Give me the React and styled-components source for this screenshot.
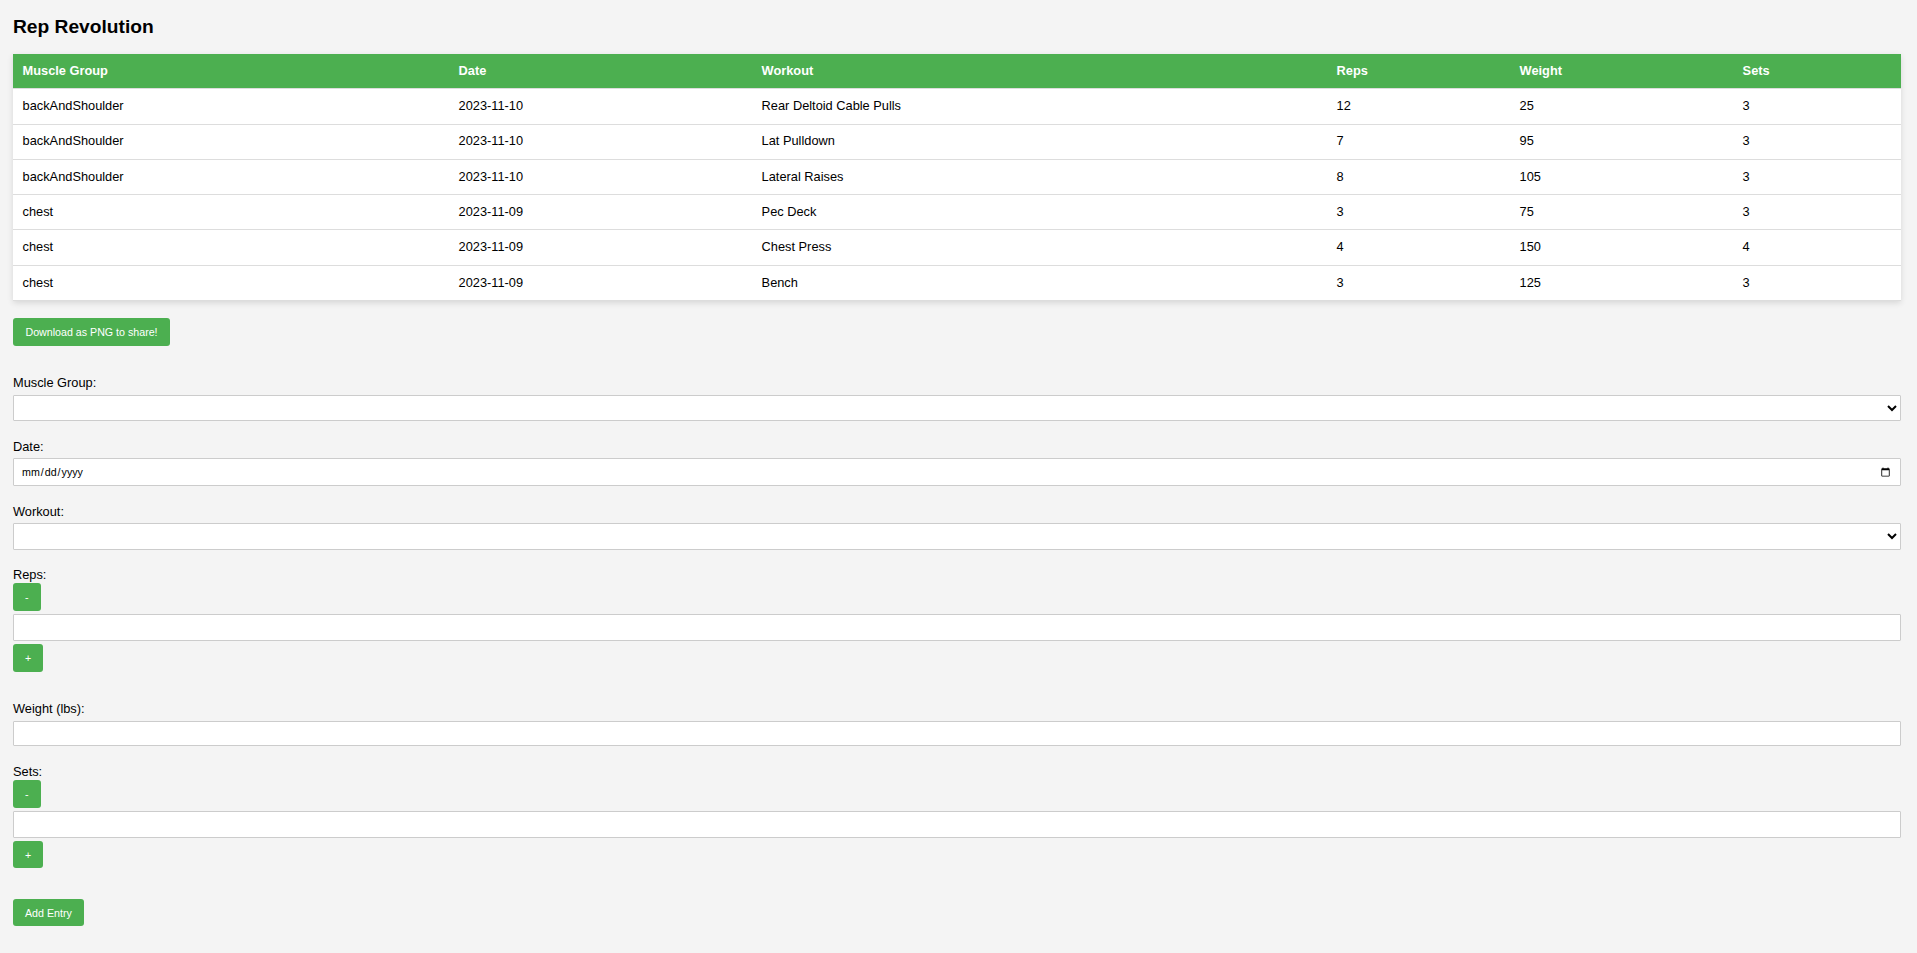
import styled, { createGlobalStyle } from "styled-components";

const GlobalStyle = createGlobalStyle`
  body {
    margin: 0;
    background: #f4f4f4;
    font-family: "Liberation Sans", Arial, sans-serif;
    color: #000;
  }
`;

const Page = styled.div`
  padding: 16px 16px 28px 13px;
`;

const Title = styled.h2`
  margin: 0 0 16px;
  font-size: 19.2px;
  line-height: 22px;
  font-weight: bold;
`;

const Table = styled.table`
  width: 100%;
  border-collapse: collapse;
  table-layout: fixed;
  background: #fff;
  box-shadow: 0 2px 6px rgba(0, 0, 0, 0.12);
  margin-bottom: 17px;
`;

const HeadCell = styled.th`
  background: #4caf50;
  color: #fff;
  font-weight: bold;
  font-size: 12.8px;
  line-height: 14.7px;
  text-align: left;
  padding: 9.8px 9.6px;
  border-bottom: 1px solid #ddd;
`;

const Cell = styled.td`
  font-size: 12.8px;
  line-height: 14.7px;
  padding: 9.8px 9.6px;
  border-bottom: 1px solid #ddd;
`;

const Button = styled.button`
  display: inline-flex;
  align-items: center;
  height: 27.6px;
  padding: 0 ${({ $pad }) => $pad || "12px"};
  border: none;
  border-radius: 3px;
  background: #4caf50;
  color: #fff;
  font-family: inherit;
  font-size: 10.67px;
  cursor: pointer;
  margin-bottom: ${({ $after }) => $after || "0"};
`;

const Form = styled.form`
  display: flex;
  flex-direction: column;
  align-items: flex-start;
`;

const Field = styled.div`
  align-self: stretch;
  display: flex;
  flex-direction: column;
  align-items: flex-start;
  gap: ${({ $tight }) => ($tight ? "0.4px" : "3.6px")};
  margin-bottom: ${({ $tight }) => ($tight ? "30.4px" : "18.7px")};
`;

const Label = styled.label`
  font-size: 12.8px;
  line-height: 14.7px;
`;

const Stepper = styled.div`
  align-self: stretch;
  display: flex;
  flex-direction: column;
  align-items: flex-start;
  gap: 3.3px;
`;

const controlBase = `
  align-self: stretch;
  box-sizing: border-box;
  width: 100%;
  margin: 0;
  background: #fff;
  border: 1px solid #ccc;
  border-radius: 1px;
  font-family: "Liberation Sans", Arial, sans-serif;
  font-size: 10.67px;
  color: #000;
`;

const Select = styled.select`
  ${controlBase}
  height: 26.4px;
  padding: 0 6px;
`;

const TextInput = styled.input`
  ${controlBase}
  height: ${({ $h }) => $h || "26.6px"};
  padding: 0 7px;
`;

const columns = ["436px", "303px", "575px", "183px", "223px", "168px"];
const headers = ["Muscle Group", "Date", "Workout", "Reps", "Weight", "Sets"];

const entries = [
  ["backAndShoulder", "2023-11-10", "Rear Deltoid Cable Pulls", 12, 25, 3],
  ["backAndShoulder", "2023-11-10", "Lat Pulldown", 7, 95, 3],
  ["backAndShoulder", "2023-11-10", "Lateral Raises", 8, 105, 3],
  ["chest", "2023-11-09", "Pec Deck", 3, 75, 3],
  ["chest", "2023-11-09", "Chest Press", 4, 150, 4],
  ["chest", "2023-11-09", "Bench", 3, 125, 3],
];

const NumberStepper = ({ label, id }) => (
  <Field $tight>
    <Label htmlFor={id}>{label}</Label>
    <Stepper>
      <Button type="button">-</Button>
      <TextInput id={id} type="text" />
      <Button type="button">+</Button>
    </Stepper>
  </Field>
);

const App = () => (
  <Page>
    <GlobalStyle />
    <Title>Rep Revolution</Title>
    <Table>
      <colgroup>
        {columns.map((w, i) => (
          <col key={i} style={{ width: w }} />
        ))}
      </colgroup>
      <thead>
        <tr>
          {headers.map((h) => (
            <HeadCell key={h}>{h}</HeadCell>
          ))}
        </tr>
      </thead>
      <tbody>
        {entries.map((row, i) => (
          <tr key={i}>
            {row.map((v, j) => (
              <Cell key={j}>{v}</Cell>
            ))}
          </tr>
        ))}
      </tbody>
    </Table>

    <Button type="button" $pad="12.5px" $after="30.7px">
      Download as PNG to share!
    </Button>

    <Form onSubmit={(e) => e.preventDefault()}>
      <Field>
        <Label htmlFor="muscle">Muscle Group:</Label>
        <Select id="muscle" defaultValue="">
          <option value=""></option>
          <option value="chest">chest</option>
          <option value="backAndShoulder">backAndShoulder</option>
        </Select>
      </Field>
      <Field>
        <Label htmlFor="date">Date:</Label>
        <TextInput id="date" type="date" $h="28.3px" />
      </Field>
      <Field>
        <Label htmlFor="workout">Workout:</Label>
        <Select id="workout" defaultValue="">
          <option value=""></option>
        </Select>
      </Field>
      <NumberStepper label="Reps:" id="reps" />
      <Field>
        <Label htmlFor="weight">Weight (lbs):</Label>
        <TextInput id="weight" type="text" $h="25.7px" />
      </Field>
      <NumberStepper label="Sets:" id="sets" />
      <Button type="submit">Add Entry</Button>
    </Form>
  </Page>
);

export default App;
